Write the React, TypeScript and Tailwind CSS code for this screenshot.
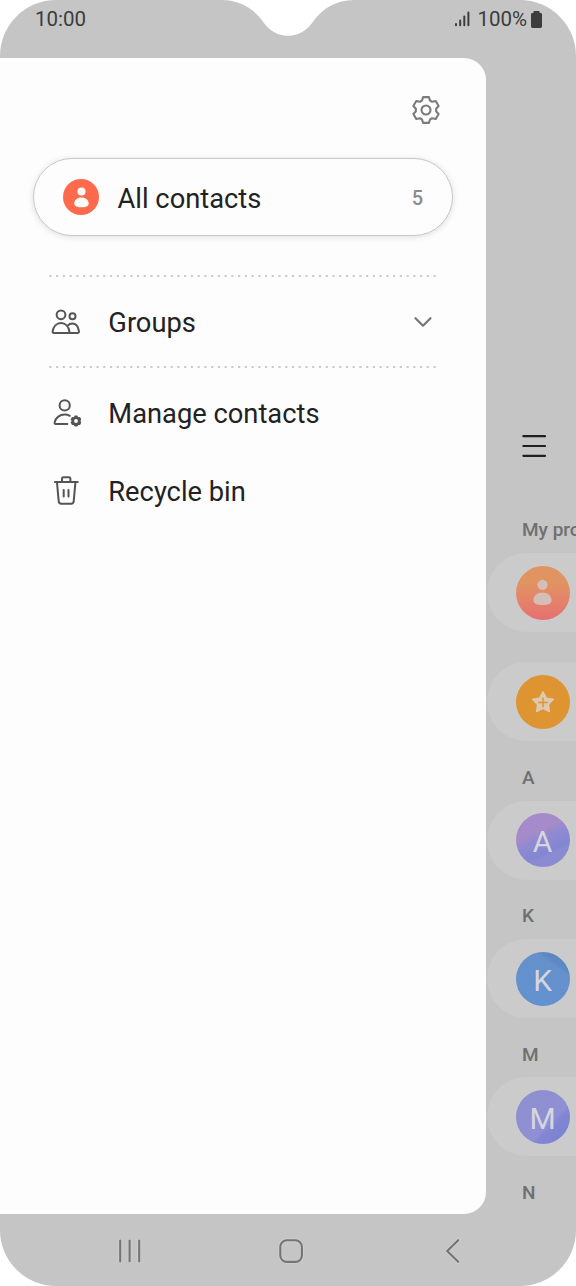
import React from "react";

type IconProps = { className?: string };

// Six-toothed gear drawn around the origin, shared by the settings and manage icons
const GEAR_PATH =
  "M-4-9.500L-2.900-12.900H2.900L4-9.500L6.140-8.200L9.720-8.960L12.620-3.940L10.140-1.240V1.240L12.620 3.940L9.720 8.960L6.140 8.200L4 9.500L2.900 12.900H-2.900L-4 9.500L-6.140 8.200L-9.720 8.960L-12.620 3.940L-10.140 1.240V-1.240L-12.620-3.940L-9.720-8.960L-6.140-8.200Z";

function GearIcon({ className }: IconProps) {
  return (
    <svg className={className} viewBox="-15 -15 30 30" fill="none" stroke="#7b7b7b" strokeWidth="2.1" strokeLinejoin="round">
      <path d={GEAR_PATH} />
      <circle r="4.500" />
    </svg>
  );
}

function PersonIcon({ className }: IconProps) {
  return (
    <svg className={className} viewBox="0 0 20 27" fill="currentColor">
      <circle cx="10" cy="5.400" r="5.400" />
      <path d="M10 13.600c5.400 0 9.600 3.400 9.600 8.200 0 3.300-4.300 4.800-9.600 4.800S.4 25.100.4 21.800c0-4.800 4.200-8.200 9.600-8.200z" />
    </svg>
  );
}

function GroupsIcon() {
  return (
    <svg className="w-[30px] h-[29px]" viewBox="0 0 30 29" fill="none" stroke="#555" strokeWidth="2" strokeLinejoin="round">
      <circle cx="10" cy="6.800" r="4.400" />
      <circle cx="21.500" cy="8.300" r="3" />
      <path d="M17.300 25H3c-1 0-1.500-.6-1.400-1.500.7-4.900 4-8.500 8.400-8.500s7.700 3.600 8.400 8.500c.1.900-.3 1.500-1.100 1.500z" />
      <path d="M16.800 17.400c1.300-1.200 2.700-1.800 4.300-1.800 3.700 0 6.300 3.200 6.900 7.900.1.900-.5 1.500-1.400 1.500h-9.300" />
    </svg>
  );
}

function ManageIcon() {
  return (
    <svg className="w-[30px] h-[30px]" viewBox="0 0 30 30" fill="none" stroke="#555" strokeWidth="2" strokeLinecap="round" strokeLinejoin="round">
      <circle cx="13.700" cy="6.400" r="5.100" />
      <path d="M16.300 25H4.700c-.9 0-1.300-.6-1.100-1.500.8-4.500 4.900-7.900 10.100-7.900 1.800 0 3.500.4 5.100 1.200" />
      <g transform="translate(25 22) scale(0.37)">
        <path d={GEAR_PATH} fill="#555" strokeWidth="3.600" />
        <circle r="5.200" fill="#fdfdfd" stroke="none" />
      </g>
    </svg>
  );
}

function BinIcon() {
  return (
    <svg className="w-7 h-[29px] mb-[3px]" viewBox="0 0 28 29" fill="none" stroke="#555" strokeWidth="2" strokeLinecap="round" strokeLinejoin="round">
      <path d="M2.900 6.100h22.800M10 5.800V2.800c0-1 .5-1.500 1.500-1.500h5.400c1 0 1.500.5 1.500 1.500v3" />
      <path d="M5 6.500l1.700 18.800c.1 1.600.9 2.400 2.500 2.400h10c1.600 0 2.400-.8 2.500-2.400l1.700-18.800" />
      <path d="M11.700 14v6.400M16.500 14v6.400" />
    </svg>
  );
}

function StarIcon() {
  return (
    <svg className="w-6 h-6" viewBox="0 0 24 24">
      <path
        d="M12 1.900L15.300 8.200L22.400 9.300L17.300 14.400L18.400 21.500L12 18.300L5.600 21.500L6.700 14.400L1.600 9.300L8.700 8.200Z"
        fill="#dcc9b0"
        stroke="#dcc9b0"
        strokeWidth="1.600"
        strokeLinejoin="round"
      />
      <path d="M12 7.600v9.600M7.200 12.400h9.600" stroke="#de9430" strokeWidth="1.500" />
    </svg>
  );
}

function StatusBar() {
  return (
    <div className="h-[58px] shrink-0 flex justify-between items-start pl-[35px] pr-[34px] pt-[7px] text-[20.500px] leading-6 text-[#3c3c3c]">
      <span>10:00</span>
      <div className="flex items-center">
        <svg className="w-4 h-4 mr-[7px]" viewBox="0 0 16 16" stroke="#3c3c3c" strokeWidth="2" strokeLinecap="round">
          <path d="M2 13v1.300M6.200 9.500v4.800M10.300 5.500v8.800M14.400 1.600v12.700" />
        </svg>
        <span>100%</span>
        <svg className="w-[11px] h-[17px] ml-1" viewBox="0 0 11 17" fill="#3c3c3c">
          <path d="M3.400 0h4.200c.7 0 1 .4 1 1v.9h.8c1 0 1.600.6 1.600 1.600v11.800c0 1-.6 1.600-1.600 1.600H1.600c-1 0-1.600-.6-1.600-1.600V3.500c0-1 .6-1.600 1.600-1.600h.8V1c0-.6.4-1 1-1z" />
        </svg>
      </div>
    </div>
  );
}

function DottedLine() {
  return (
    <svg className="block w-[388px] h-0.5 ml-[49px] shrink-0" viewBox="0 0 388 2">
      <path d="M0.300 1h387" stroke="#cbcbcb" strokeWidth="2" strokeDasharray="2.200 4.540" />
    </svg>
  );
}

type DrawerItemProps = {
  icon: React.ReactNode;
  label: string;
  children?: React.ReactNode;
};

function DrawerItem({ icon, label, children }: DrawerItemProps) {
  return (
    <div className="h-[78px] shrink-0 flex items-center pl-[49px] pr-[54px]">
      <div className="w-[34px] flex justify-center">{icon}</div>
      <span className="ml-[25.300px] flex-1">{label}</span>
      {children}
    </div>
  );
}

function Drawer() {
  return (
    <aside className="w-[486px] shrink-0 flex flex-col bg-[#fdfdfd] rounded-r-[22px] text-[27.300px] leading-8 text-[#222]">
      <div className="h-[100px] shrink-0 flex justify-end pr-[45.500px] pt-[36.500px]">
        <GearIcon className="w-[30px] h-[30px]" />
      </div>

      <div className="h-[78px] shrink-0 ml-[33px] mr-[33px] flex items-center pl-[29px] pr-[29px] rounded-full bg-[#fdfdfd] border border-[#c8c8c8] shadow-[0_1px_6px_rgba(0,0,0,0.13)]">
        <div className="w-9 h-9 rounded-full bg-[#ff6a4d] text-[#fdfdfd] flex items-center justify-center">
          <PersonIcon className="w-[15px] h-[21px]" />
        </div>
        <span className="ml-[18.500px] mt-[3px] flex-1">All contacts</span>
        <span className="mt-0.5 text-[20px] font-medium text-[#8c8c8c]">5</span>
      </div>

      <div className="h-[39px] shrink-0" />
      <DottedLine />
      <div className="h-[89px] shrink-0 flex flex-col justify-center pt-0.5">
        <DrawerItem icon={<GroupsIcon />} label="Groups">
          <svg className="w-[18px] h-3 mb-0.5" viewBox="0 0 18 12" fill="none" stroke="#777" strokeWidth="2.200" strokeLinecap="round" strokeLinejoin="round">
            <path d="M1.500 2.200l7.500 7.500 7.500-7.500" />
          </svg>
        </DrawerItem>
      </div>
      <DottedLine />
      <div className="pt-[7px]">
        <DrawerItem icon={<ManageIcon />} label="Manage contacts" />
        <DrawerItem icon={<BinIcon />} label="Recycle bin" />
      </div>
    </aside>
  );
}

function ContactRow({ avatar, children }: { avatar: string; children: React.ReactNode }) {
  return (
    <div className="h-[79px] w-[180px] shrink-0 flex items-center pl-[28.600px] rounded-l-[40px] bg-[#cbcbcb]">
      <div className={`w-[54px] h-[54px] rounded-full overflow-hidden flex items-center justify-center text-[30px] leading-none text-[#d6d6de] ${avatar}`}>
        {children}
      </div>
    </div>
  );
}

function SectionLabel({ children }: { children: string }) {
  return (
    <div className="h-[59.400px] shrink-0 pl-[35px] pt-[24.500px] text-[19px] leading-6 font-medium text-[#707070]">{children}</div>
  );
}

const contacts = [
  { letter: "A", avatar: "bg-[linear-gradient(155deg,#a58bc9_0%,#a58bc9_36%,#928ad0_46%,#8286d3_68%,#8a8ad2_72%,#8c8cd2_100%)]" },
  { letter: "K", avatar: "bg-[linear-gradient(215deg,#5a86be_0%,#5c89c2_22%,#6590cb_27%,#6392cf_75%,#5f8ecb_100%)]" },
  { letter: "M", avatar: "bg-[linear-gradient(135deg,#8c90cf_0%,#908fd3_62%,#8286d3_67%,#7880d4_100%)]" },
];

function ContactList() {
  return (
    <div className="flex-1 min-w-0 flex flex-col pl-px overflow-hidden">
      <div className="h-[436px] shrink-0 pt-[376px] pl-[35px]">
        <svg className="w-6 h-6" viewBox="0 0 24 24" stroke="#1f1f1f" strokeWidth="2.200" strokeLinecap="round">
          <path d="M1.400 2.200h21.600M1.400 12h21.600M1.400 21.800h21.600" />
        </svg>
      </div>
      <div className="h-[59px] shrink-0 pl-[35px] pt-6 text-[19px] leading-6 font-medium text-[#707070] whitespace-nowrap">
        My profile
      </div>
      <ContactRow avatar="bg-gradient-to-b from-[#e19462] from-30% to-[#e66f70]">
        <PersonIcon className="w-[19px] h-[27px] text-[#d4beb7]" />
      </ContactRow>
      <div className="h-[30.300px] shrink-0" />
      <ContactRow avatar="bg-[#de9430]">
        <StarIcon />
      </ContactRow>
      {contacts.map((c) => (
        <React.Fragment key={c.letter}>
          <SectionLabel>{c.letter}</SectionLabel>
          <ContactRow avatar={c.avatar}>
            <span className="mt-1">{c.letter}</span>
          </ContactRow>
        </React.Fragment>
      ))}
      <SectionLabel>N</SectionLabel>
    </div>
  );
}

function NavigationBar() {
  return (
    <div className="h-[72px] shrink-0 flex items-center pl-[118px] pt-0.5">
      <svg className="w-6 h-6" viewBox="0 0 24 24" fill="none" strokeLinecap="round">
        <path d="M2.200 1.600v20.800M11.600 1.600v20.800M21.200 1.600v20.800" stroke="#d0d0d0" strokeWidth="3.800" />
        <path d="M2.200 1.600v20.800M11.600 1.600v20.800M21.200 1.600v20.800" stroke="#747474" strokeWidth="2.100" />
      </svg>
      <svg className="w-[26px] h-[26px] ml-[135.500px]" viewBox="0 0 26 26" fill="none">
        <rect x="2.300" y="2.300" width="21.600" height="21.600" rx="6.500" stroke="#d0d0d0" strokeWidth="3.800" />
        <rect x="2.300" y="2.300" width="21.600" height="21.600" rx="6.500" stroke="#747474" strokeWidth="2.100" />
      </svg>
      <svg className="w-4 h-[26px] ml-[141.500px]" viewBox="0 0 16 26" fill="none" strokeLinecap="round">
        <path d="M13.200 2.200L2.200 13l11 10.800" stroke="#d0d0d0" strokeWidth="3.800" />
        <path d="M13.200 2.200L2.200 13l11 10.800" stroke="#747474" strokeWidth="2.100" />
      </svg>
    </div>
  );
}

export default function App() {
  return (
    <div className="w-[576px] h-[1286px] bg-white font-[Roboto,sans-serif]">
      <div className="relative w-full h-full flex flex-col overflow-hidden rounded-[56px] bg-[#c5c5c5]">
        {/* Camera notch */}
        <svg className="absolute top-0 left-[222px] w-[132px] h-9" viewBox="0 0 132 36" fill="#fff">
          <path d="M0 0c18 0 32 9 40.500 21C47 31 56 35.700 66 35.700S85 31 91.500 21C100 9 114 0 132 0z" />
        </svg>
        <StatusBar />
        <div className="h-[1156px] shrink-0 flex">
          <Drawer />
          <ContactList />
        </div>
        <NavigationBar />
      </div>
    </div>
  );
}
